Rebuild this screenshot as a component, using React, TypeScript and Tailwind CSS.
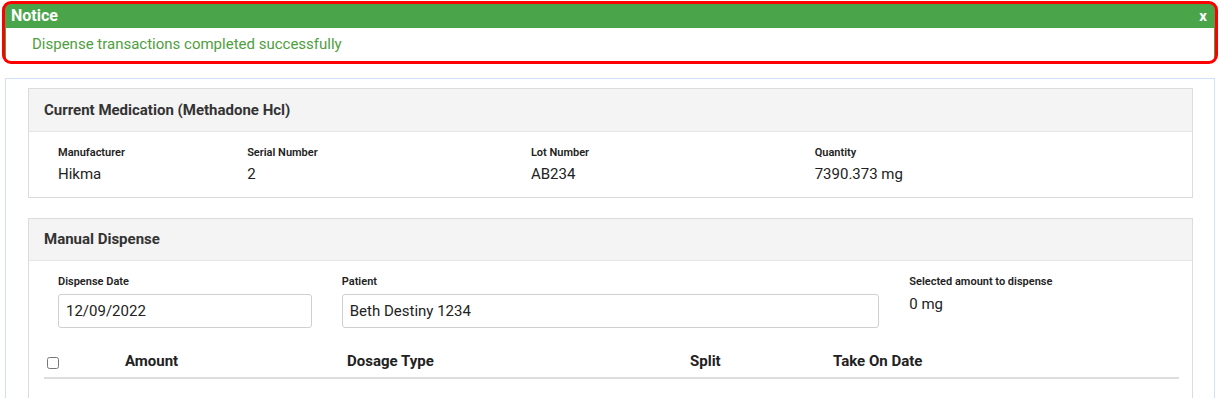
import React from 'react';

const font = { fontFamily: 'Roboto, "Liberation Sans", sans-serif' };

function Label({ children }: { children: React.ReactNode }) {
  return <div className="text-[11px] font-semibold text-[#222] leading-[14px]">{children}</div>;
}

export default function App() {
  return (
    <div className="w-[1220px] h-[398px] overflow-hidden bg-white" style={font}>
      {/* notice */}
      <div className="relative mx-[5px] mt-[3px] border border-[#4aa54a]">
        <div className="h-[24px] bg-[#4aa54a] flex items-center justify-between px-[5px] text-white font-bold">
          <span className="text-[16px]">Notice</span>
          <span className="text-[15px] mr-[2px]">x</span>
        </div>
        <div className="h-[33px] flex items-center pl-[26px] text-[15px] text-[#4e9e40]">
          Dispense transactions completed successfully
        </div>
        <div className="absolute -left-[4px] -right-[4px] -top-[3px] -bottom-[3px] border-[3px] border-[#ff0000] rounded-[9px] pointer-events-none" />
      </div>

      {/* main panel */}
      <div className="mx-[5px] mt-[16px] border border-[#cfe0f7] border-b-0 pt-[9px] pl-[22px] pr-[21px] h-[400px]">
        {/* current medication */}
        <div className="border border-[#dcdcdc] bg-white">
          <div className="h-[43px] bg-[#f4f4f4] border-b border-[#e6e6e6] flex items-center px-[15px] text-[15px] font-bold text-[#333]">
            Current Medication (Methadone Hcl)
          </div>
          <div className="px-[14px] pt-[14px] pb-[13px]">
            <div className="grid grid-cols-12">
              <div className="col-span-2 px-[15px]">
                <Label>Manufacturer</Label>
                <div className="text-[15px] text-[#222] mt-[4px] leading-[20px]">Hikma</div>
              </div>
              <div className="col-span-3 px-[15px]">
                <Label>Serial Number</Label>
                <div className="text-[15px] text-[#222] mt-[4px] leading-[20px]">2</div>
              </div>
              <div className="col-span-3 px-[15px]">
                <Label>Lot Number</Label>
                <div className="text-[15px] text-[#222] mt-[4px] leading-[20px]">AB234</div>
              </div>
              <div className="col-span-3 px-[15px]">
                <Label>Quantity</Label>
                <div className="text-[15px] text-[#222] mt-[4px] leading-[20px]">7390.373 mg</div>
              </div>
            </div>
          </div>
        </div>

        {/* manual dispense */}
        <div className="mt-[20px] border border-[#dcdcdc] bg-white h-[300px]">
          <div className="h-[42px] bg-[#f4f4f4] border-b border-[#e6e6e6] flex items-center px-[15px] text-[15px] font-bold text-[#333]">
            Manual Dispense
          </div>
          <div className="px-[14px] pt-[14px]">
            <div className="grid grid-cols-12">
              <div className="col-span-3 px-[15px]">
                <Label>Dispense Date</Label>
                <div className="mt-[5px] h-[34px] border border-[#cfcfcf] rounded-[3px] flex items-center px-[7px] text-[15px] text-[#222]">
                  12/09/2022
                </div>
              </div>
              <div className="col-span-6 px-[15px]">
                <Label>Patient</Label>
                <div className="mt-[5px] h-[34px] border border-[#cfcfcf] rounded-[3px] flex items-center px-[7px] text-[15px] text-[#222]">
                  Beth Destiny 1234
                </div>
              </div>
              <div className="col-span-3 px-[15px]">
                <Label>Selected amount to dispense</Label>
                <div className="text-[15px] text-[#222] mt-[5px] leading-[20px]">0 mg</div>
              </div>
            </div>
            <div className="mt-[17px] ml-[1px] -mr-[1px] border-b-2 border-[#dddddd] h-[34px] flex items-center text-[15px] font-bold text-[#222]">
              <div className="w-[81px] pl-[3px] flex items-center pt-[4px]">
                <input type="checkbox" className="w-[12px] h-[12px] m-0" />
              </div>
              <div className="w-[222px]">Amount</div>
              <div className="w-[343px]">Dosage Type</div>
              <div className="w-[143px]">Split</div>
              <div>Take On Date</div>
            </div>
          </div>
        </div>
      </div>
    </div>
  );
}
